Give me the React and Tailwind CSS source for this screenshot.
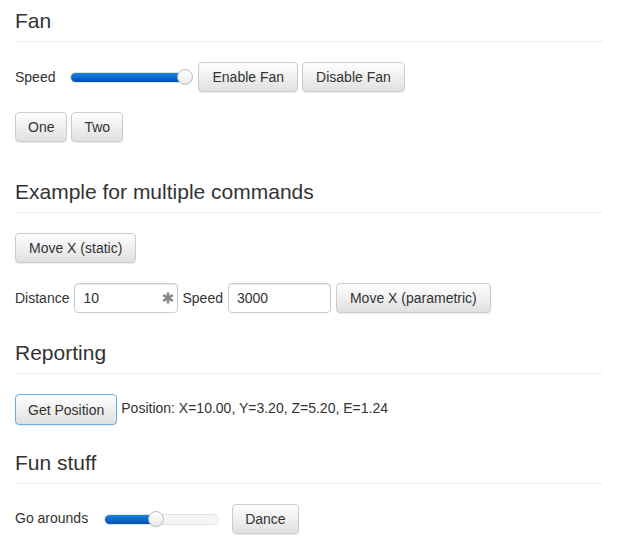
import React from "react";

function Btn({ children, focused, className = "" }) {
  return (
    <button
      className={
        "h-[30px] px-[12px] rounded-[4px] border text-[14px] leading-none text-[#333] bg-gradient-to-b from-white to-[#e0e0e0] shadow-[inset_0_1px_0_rgba(255,255,255,0.15),0_1px_1px_rgba(0,0,0,0.075)] " +
        (focused ? "border-[#66afe9] from-[#ebebeb] to-[#e0e0e0]" : "border-[#ccc]") +
        " " +
        className
      }
    >
      {children}
    </button>
  );
}

function Slider({ width, pct }) {
  return (
    <div className="relative h-[16px] flex items-center" style={{ width }}>
      <div className="w-full h-[11px] rounded-full bg-[#f5f5f5] border border-[#e3e3e3] overflow-hidden">
        <div
          className="h-full bg-gradient-to-b from-[#1b82dc] to-[#0050b8]"
          style={{ width: pct }}
        />
      </div>
      <div
        className="absolute top-0 w-[16px] h-[16px] rounded-full border border-[#bbb] bg-gradient-to-b from-white to-[#eaeaea]"
        style={{ left: `calc(${pct} - 8px)` }}
      />
    </div>
  );
}

function Header({ children, className = "" }) {
  return (
    <div className={"text-[21px] leading-[24px] pb-[8px] border-b border-[#eee] text-[#333] " + className}>
      {children}
    </div>
  );
}

function Asterisk() {
  return (
    <svg width="12" height="12" viewBox="0 0 12 12" className="absolute right-[4px] top-[9px]">
      <g stroke="#888" strokeWidth="2.6" strokeLinecap="butt">
        <line x1="6" y1="0.5" x2="6" y2="11.5" />
        <line x1="1.2" y1="3.2" x2="10.8" y2="8.8" />
        <line x1="1.2" y1="8.8" x2="10.8" y2="3.2" />
      </g>
    </svg>
  );
}

export default function App() {
  return (
    <div
      className="w-[618px] h-[558px] bg-white text-[#333] text-[14px] pl-[15px] pr-[15px] pt-[9px]"
      style={{ fontFamily: '"Liberation Sans", Arial, sans-serif' }}
    >
      <Header>Fan</Header>
      <div className="mt-[20px] flex items-center h-[30px]">
        <span className="mr-[15px]">Speed</span>
        <Slider width="122px" pct="94%" />
        <Btn className="ml-[6px] px-[13px]">Enable Fan</Btn>
        <Btn className="ml-[4px] px-[13px]">Disable Fan</Btn>
      </div>
      <div className="mt-[20px] flex items-center h-[30px]">
        <Btn>One</Btn>
        <Btn className="ml-[4px]">Two</Btn>
      </div>

      <Header className="mt-[38px]">Example for multiple commands</Header>
      <div className="mt-[20px] flex items-center h-[30px]">
        <Btn className="px-[13px]">Move X (static)</Btn>
      </div>
      <div className="mt-[20px] flex items-center h-[30px]">
        <span className="mr-[5px]">Distance</span>
        <div className="relative">
          <input
            readOnly
            value="10"
            className="w-[104px] h-[30px] border border-[#ccc] rounded-[4px] px-[8px] text-[14px] text-[#333] outline-none shadow-[inset_0_1px_1px_rgba(0,0,0,0.075)]"
          />
          <Asterisk />
        </div>
        <span className="ml-[4px] mr-[5px]">Speed</span>
        <input
          readOnly
          value="3000"
          className="w-[103px] h-[30px] border border-[#ccc] rounded-[4px] px-[8px] text-[14px] text-[#333] outline-none shadow-[inset_0_1px_1px_rgba(0,0,0,0.075)]"
        />
        <Btn className="ml-[5px] px-[13px]">Move X (parametric)</Btn>
      </div>

      <Header className="mt-[28px]">Reporting</Header>
      <div className="mt-[20px] flex items-center h-[31px]">
        <Btn focused className="h-[31px] px-[12px]">Get Position</Btn>
        <span className="ml-[4px] -mt-[3px]">Position: X=10.00, Y=3.20, Z=5.20, E=1.24</span>
      </div>

      <Header className="mt-[26px]">Fun stuff</Header>
      <div className="mt-[20px] flex items-center h-[30px]">
        <span className="mr-[16px] -mt-[2px]">Go arounds</span>
        <Slider width="115px" pct="45%" />
        <Btn className="ml-[13px]">Dance</Btn>
      </div>
    </div>
  );
}
